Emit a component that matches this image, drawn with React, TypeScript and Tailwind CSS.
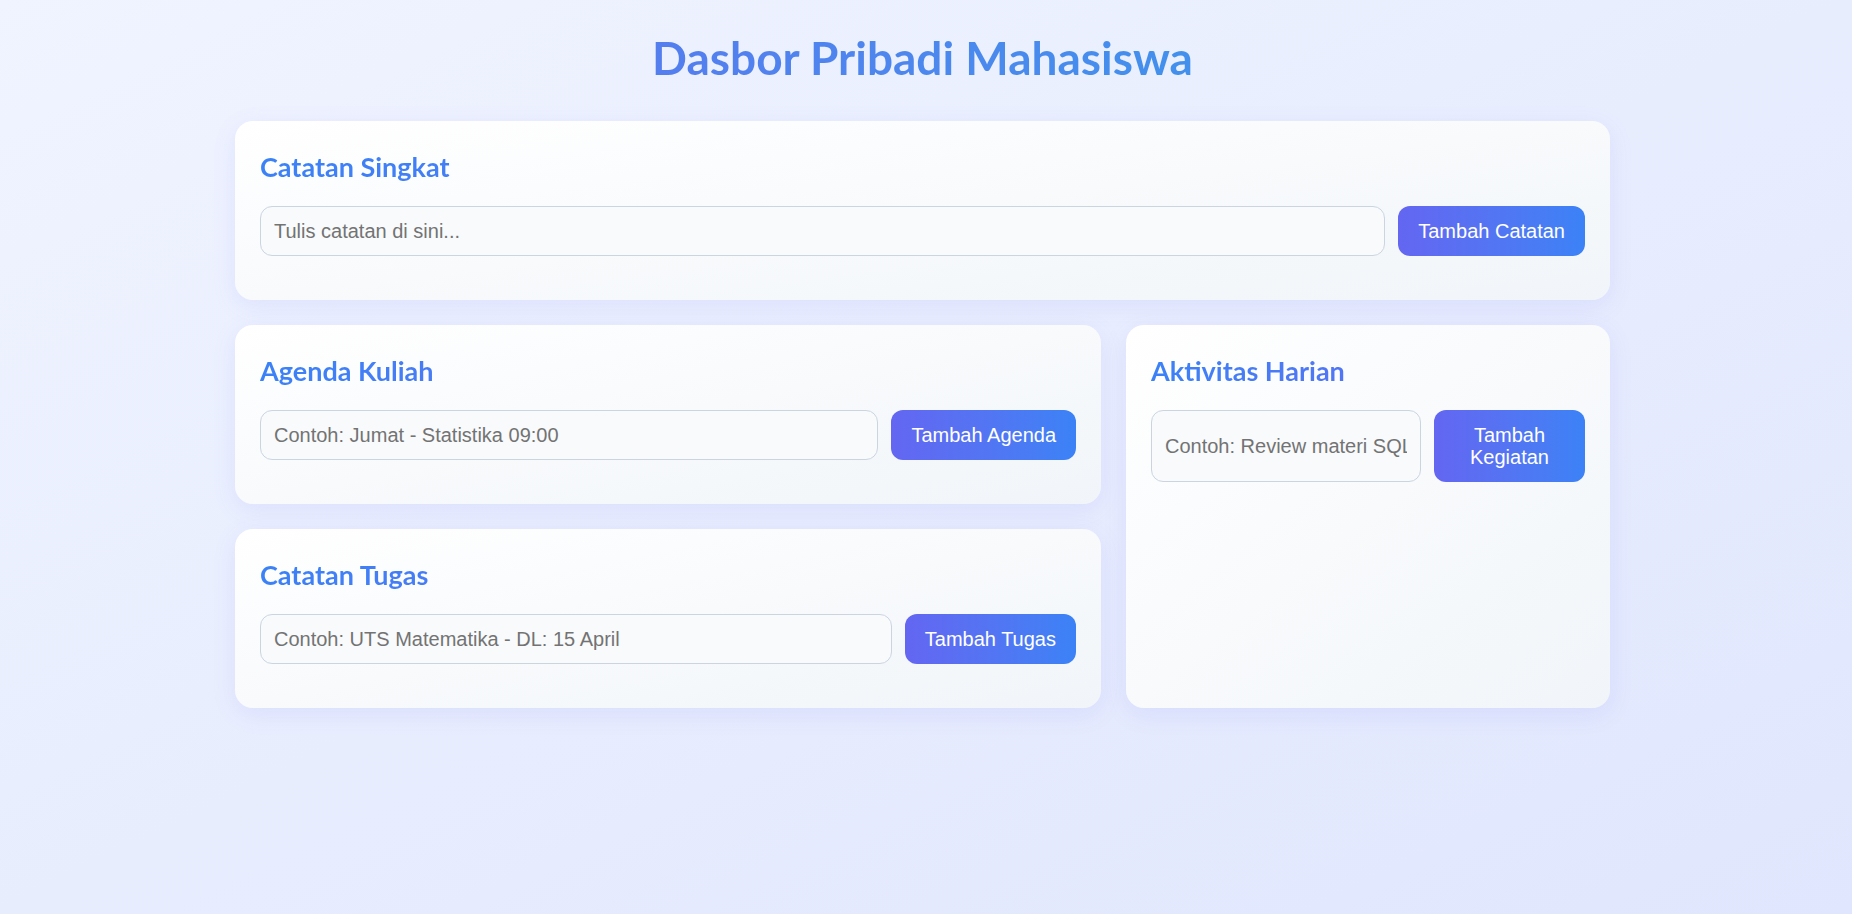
type Panel = {
    title: string;
    placeholder: string;
    button: string;
};

const notes: Panel = { title: 'Catatan Singkat', placeholder: 'Tulis catatan di sini...', button: 'Tambah Catatan' };
const agenda: Panel = { title: 'Agenda Kuliah', placeholder: 'Contoh: Jumat - Statistika 09:00', button: 'Tambah Agenda' };
const tasks: Panel = { title: 'Catatan Tugas', placeholder: 'Contoh: UTS Matematika - DL: 15 April', button: 'Tambah Tugas' };
const daily: Panel = { title: 'Aktivitas Harian', placeholder: 'Contoh: Review materi SQL', button: 'Tambah Kegiatan' };

function Card({ panel, className = '' }: { panel: Panel; className?: string }) {
    return (
        <section
            className={`rounded-[18px] bg-linear-to-br from-white to-[#f1f5f9] px-[25px] pt-[30px] pb-[44px] shadow-[0_6px_24px_rgba(99,102,241,0.10)] ${className}`}
        >
            <h2 className="mb-[23px] bg-linear-to-r from-[#3b82f6] to-[#6366f1] bg-clip-text text-[27px] font-bold leading-[32px] text-transparent [font-family:Lato,sans-serif]">
                {panel.title}
            </h2>
            {/* Input row */}
            <div className="flex gap-[13px]">
                <input
                    type="text"
                    placeholder={panel.placeholder}
                    className="min-w-[270px] flex-1 rounded-[12px] border border-[#cbd5e1] bg-[#f8fafc] px-[13px] text-[20px] text-[#374151] outline-none placeholder:text-[#737373] [font-family:'Liberation_Sans',Arial,sans-serif]"
                />
                <button className="rounded-[12px] bg-linear-to-r from-[#6366f1] to-[#3b82f6] px-[20px] py-[14px] text-[20px] leading-[22px] text-white [font-family:'Liberation_Sans',Arial,sans-serif]">
                    {panel.button}
                </button>
            </div>
        </section>
    );
}

export default function App() {
    return (
        <div className="min-h-screen bg-linear-to-br from-[#f0f4ff] to-[#e0e6fd] pr-[7px] pt-[30px] pb-10">
            {/* Header */}
            <h1 className="mb-[35px] bg-linear-to-r from-[#6366f1] to-[#0ea5e9] bg-clip-text text-center text-[46px] font-bold leading-[56px] text-transparent [font-family:Lato,sans-serif]">
                Dasbor Pribadi Mahasiswa
            </h1>

            <div className="mx-auto w-[1375px]">
                <Card panel={notes} />

                <div className="mt-[25px] grid grid-cols-[866px_484px] gap-[25px]">
                    <div className="flex flex-col gap-[25px]">
                        <Card panel={agenda} />
                        <Card panel={tasks} />
                    </div>
                    <Card panel={daily} />
                </div>
            </div>
        </div>
    );
}
